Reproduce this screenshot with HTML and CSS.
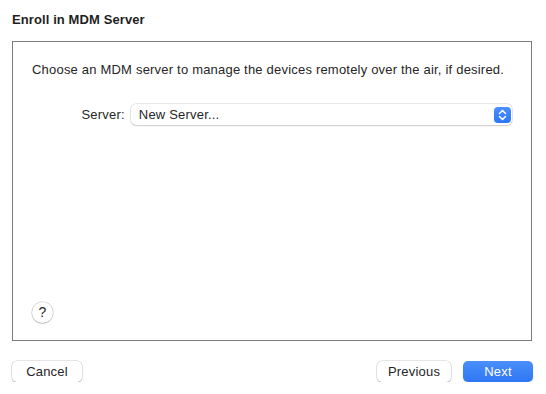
FILE: index.html
```html
<!DOCTYPE html>
<html lang="en">
<head>
    <meta charset="UTF-8">
    <meta name="viewport" content="width=device-width, initial-scale=1.0">
    <title>Enroll in MDM Server</title>
    <link rel="stylesheet" href="styles.css">
</head>
<body>
    <h1 class="sheet-title">Enroll in MDM Server</h1>
    <div class="panel">
        <p class="intro">Choose an MDM server to manage the devices remotely over the air, if desired.</p>
        <div class="form-row">
            <label class="form-label" for="serverSelect">Server:</label>
            <div class="popup" id="serverSelect">
                <span class="popup-value">New Server...</span>
                <span class="stepper">
                    <svg width="9" height="12" viewBox="0 0 9 12">
                        <path d="M1.5 4.5 L4.5 1.5 L7.5 4.5 M1.5 7.5 L4.5 10.5 L7.5 7.5" fill="none" stroke="#fff" stroke-width="1.5" stroke-linecap="round" stroke-linejoin="round"/>
                    </svg>
                </span>
            </div>
        </div>
        <button class="help-button">?</button>
    </div>
    <div class="footer">
        <button class="btn">Cancel</button>
        <div class="nav-buttons">
            <button class="btn btn-previous">Previous</button>
            <button class="btn btn-primary">Next</button>
        </div>
    </div>
</body>
</html>
```

FILE: styles.css
```css
body {
    margin: 0;
    padding: 12px 13px 0 12px;
    background: #ffffff;
    font-family: "Liberation Sans", Arial, sans-serif;
    font-size: 13px;
    letter-spacing: 0.2px;
    color: #262626;
}
.sheet-title {
    margin: 0 0 13px 0;
    font-size: 13px;
    line-height: 16px;
    font-weight: 700;
    letter-spacing: 0.1px;
    color: #1f1f1f;
}
.panel {
    box-sizing: border-box;
    width: 520px;
    height: 300px;
    border: 1px solid #7c7c7c;
    padding: 20px 19px 17px 19px;
    display: flex;
    flex-direction: column;
}
.intro {
    margin: 0;
    line-height: 16px;
    white-space: nowrap;
}
.form-row {
    display: flex;
    align-items: center;
    margin-top: 26px;
}
.form-label {
    width: 93px;
    text-align: right;
    margin-right: 6px;
}
.popup {
    box-sizing: border-box;
    width: 382px;
    height: 21px;
    display: flex;
    align-items: center;
    justify-content: space-between;
    padding: 0 1px 0 8px;
    background: #fff;
    border-radius: 5px;
    box-shadow: 0 0 0 0.5px rgba(0, 0, 0, 0.18), 0 1px 1.5px rgba(0, 0, 0, 0.12);
}
.stepper {
    width: 17px;
    height: 16px;
    border-radius: 4px;
    background: linear-gradient(#4a8ff9, #2f76f5);
    display: flex;
    align-items: center;
    justify-content: center;
}
.help-button {
    margin-top: auto;
    width: 21px;
    height: 21px;
    padding: 0;
    border: none;
    border-radius: 50%;
    background: #fff;
    box-shadow: 0 0 0 0.5px rgba(0, 0, 0, 0.2), 0 1px 1.5px rgba(0, 0, 0, 0.15);
    font-family: inherit;
    font-size: 14px;
    line-height: 21px;
    color: #262626;
}
.footer {
    width: 521px;
    margin-top: 20px;
    display: flex;
    justify-content: space-between;
}
.nav-buttons {
    display: flex;
    gap: 12px;
}
.btn {
    height: 21px;
    width: 70px;
    padding: 0;
    border: none;
    border-radius: 5px;
    background: #fff;
    box-shadow: 0 0 0 0.5px rgba(0, 0, 0, 0.2), 0 1px 1.5px rgba(0, 0, 0, 0.15);
    font-family: inherit;
    font-size: 13px;
    letter-spacing: 0.2px;
    line-height: 20px;
    color: #262626;
}
.btn-previous {
    width: 74px;
}
.btn-primary {
    background: linear-gradient(#4a8ff9, #2f76f5);
    color: #fff;
    box-shadow: 0 1px 1.5px rgba(0, 0, 0, 0.15);
}
```
